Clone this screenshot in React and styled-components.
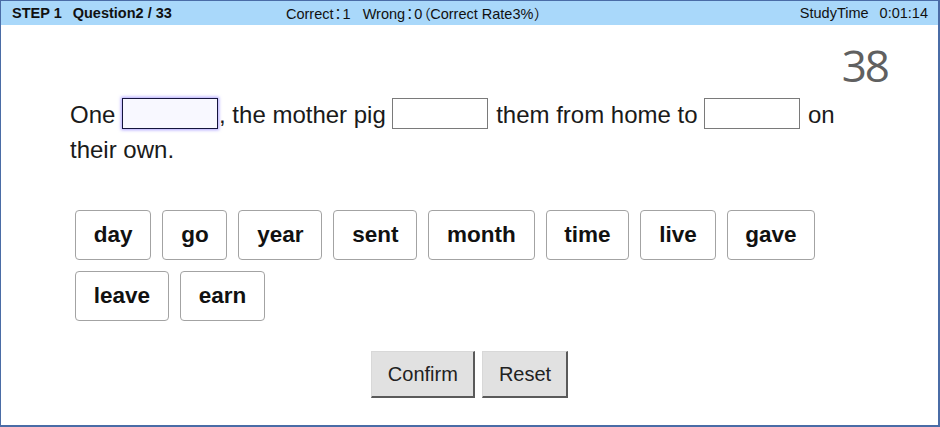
import React from "react";
import styled, { createGlobalStyle } from "styled-components";

const Global = createGlobalStyle`
  html, body { margin: 0; padding: 0; background: #fff; }
  * { box-sizing: border-box; }
`;

const Frame = styled.div`
  width: 940px;
  height: 427px;
  border: 1px solid #4a6ca6;
  border-right-width: 2px;
  border-bottom-width: 2px;
  display: flex;
  flex-direction: column;
  font-family: "Liberation Sans", Arial, "Noto Sans CJK JP", sans-serif;
  color: #111;
  background: #fff;
`;

const Header = styled.header`
  height: 24px;
  background: #a9d8fa;
  display: flex;
  align-items: center;
  padding: 0 10px 0 11px;
  font-size: 14.5px;
  color: #111;
`;

const HeaderLeft = styled.div`
  font-weight: bold;
  width: 274px;
  display: flex;
  gap: 11px;
`;

const HeaderMid = styled.div`
  flex: 1;
  white-space: pre;
`;

const HeaderRight = styled.div`
  display: flex;
  gap: 11px;
`;

const Punct = styled.span`
  font-family: "Noto Sans CJK JP", sans-serif;
  font-feature-settings: "palt";
  font-size: 14px;
  margin: ${(p) => p.$m || "0"};
`;

const TimerRow = styled.div`
  display: flex;
  justify-content: flex-end;
  padding: 14px 50px 0 0;
`;

const Timer = styled.div`
  font-family: "Open Sans", sans-serif;
  font-size: 44px;
  line-height: 52px;
  letter-spacing: -2px;
  color: #606060;
`;

const Sentence = styled.p`
  margin: 6px 0 0;
  padding: 0 90px 0 69px;
  font-size: 24px;
  line-height: 35px;
  color: #1a1a1a;
`;

const Blank = styled.input`
  width: 96px;
  height: 31px;
  margin: 0 1px 3px 0;
  vertical-align: bottom;
  border: 1px solid ${(p) => (p.$focused ? "#14143c" : "#7a7a7a")};
  background: ${(p) => (p.$focused ? "#f8f8ff" : "#fff")};
  box-shadow: ${(p) => (p.$focused ? "0 0 3px 1px rgba(110, 90, 255, 0.55)" : "none")};
  outline: none;
  font-size: 18px;
  padding: 0 4px;
`;

const WordBank = styled.div`
  margin: 43px 0 0 74px;
  width: 790px;
  display: flex;
  flex-wrap: wrap;
  gap: 11px;
`;

const Word = styled.button`
  height: 50px;
  padding: 0 17.8px;
  border: 1px solid #a3a3a3;
  border-radius: 4px;
  background: #fff;
  font-family: "Liberation Sans", Arial, sans-serif;
  font-weight: bold;
  font-size: 22.5px;
  color: #111;
  cursor: pointer;
`;

const Actions = styled.div`
  margin-top: 30px;
  display: flex;
  justify-content: center;
  gap: 7px;
`;

const ActionButton = styled.button`
  height: 47px;
  padding: 0 15px 0 16px;
  background: #e1e1e1;
  border: 1px solid #d8d8d8;
  border-right: 2px solid #5a5a5a;
  border-bottom: 2px solid #5a5a5a;
  font-family: "Liberation Sans", Arial, sans-serif;
  font-size: 20px;
  color: #222;
  cursor: pointer;
`;

const words = ["day", "go", "year", "sent", "month", "time", "live", "gave", "leave", "earn"];

export default function App() {
  return (
    <>
      <Global />
      <Frame>
        <Header>
          <HeaderLeft>
            <span>STEP 1</span>
            <span>Question2 / 33</span>
          </HeaderLeft>
          <HeaderMid>
            Correct<Punct $m="0 1px">：</Punct>1   Wrong<Punct $m="0 1px">：</Punct>0<Punct $m="0 0 0 1px">（</Punct>Correct Rate3%<Punct $m="0 0 0 1px">）</Punct>
          </HeaderMid>
          <HeaderRight>
            <span>StudyTime</span>
            <span>0:01:14</span>
          </HeaderRight>
        </Header>
        <TimerRow>
          <Timer>38</Timer>
        </TimerRow>
        <Sentence>
          One <Blank $focused readOnly />, the mother pig <Blank readOnly /> them from home to <Blank readOnly /> on their own.
        </Sentence>
        <WordBank>
          {words.map((w) => (
            <Word key={w}>{w}</Word>
          ))}
        </WordBank>
        <Actions>
          <ActionButton>Confirm</ActionButton>
          <ActionButton>Reset</ActionButton>
        </Actions>
      </Frame>
    </>
  );
}
